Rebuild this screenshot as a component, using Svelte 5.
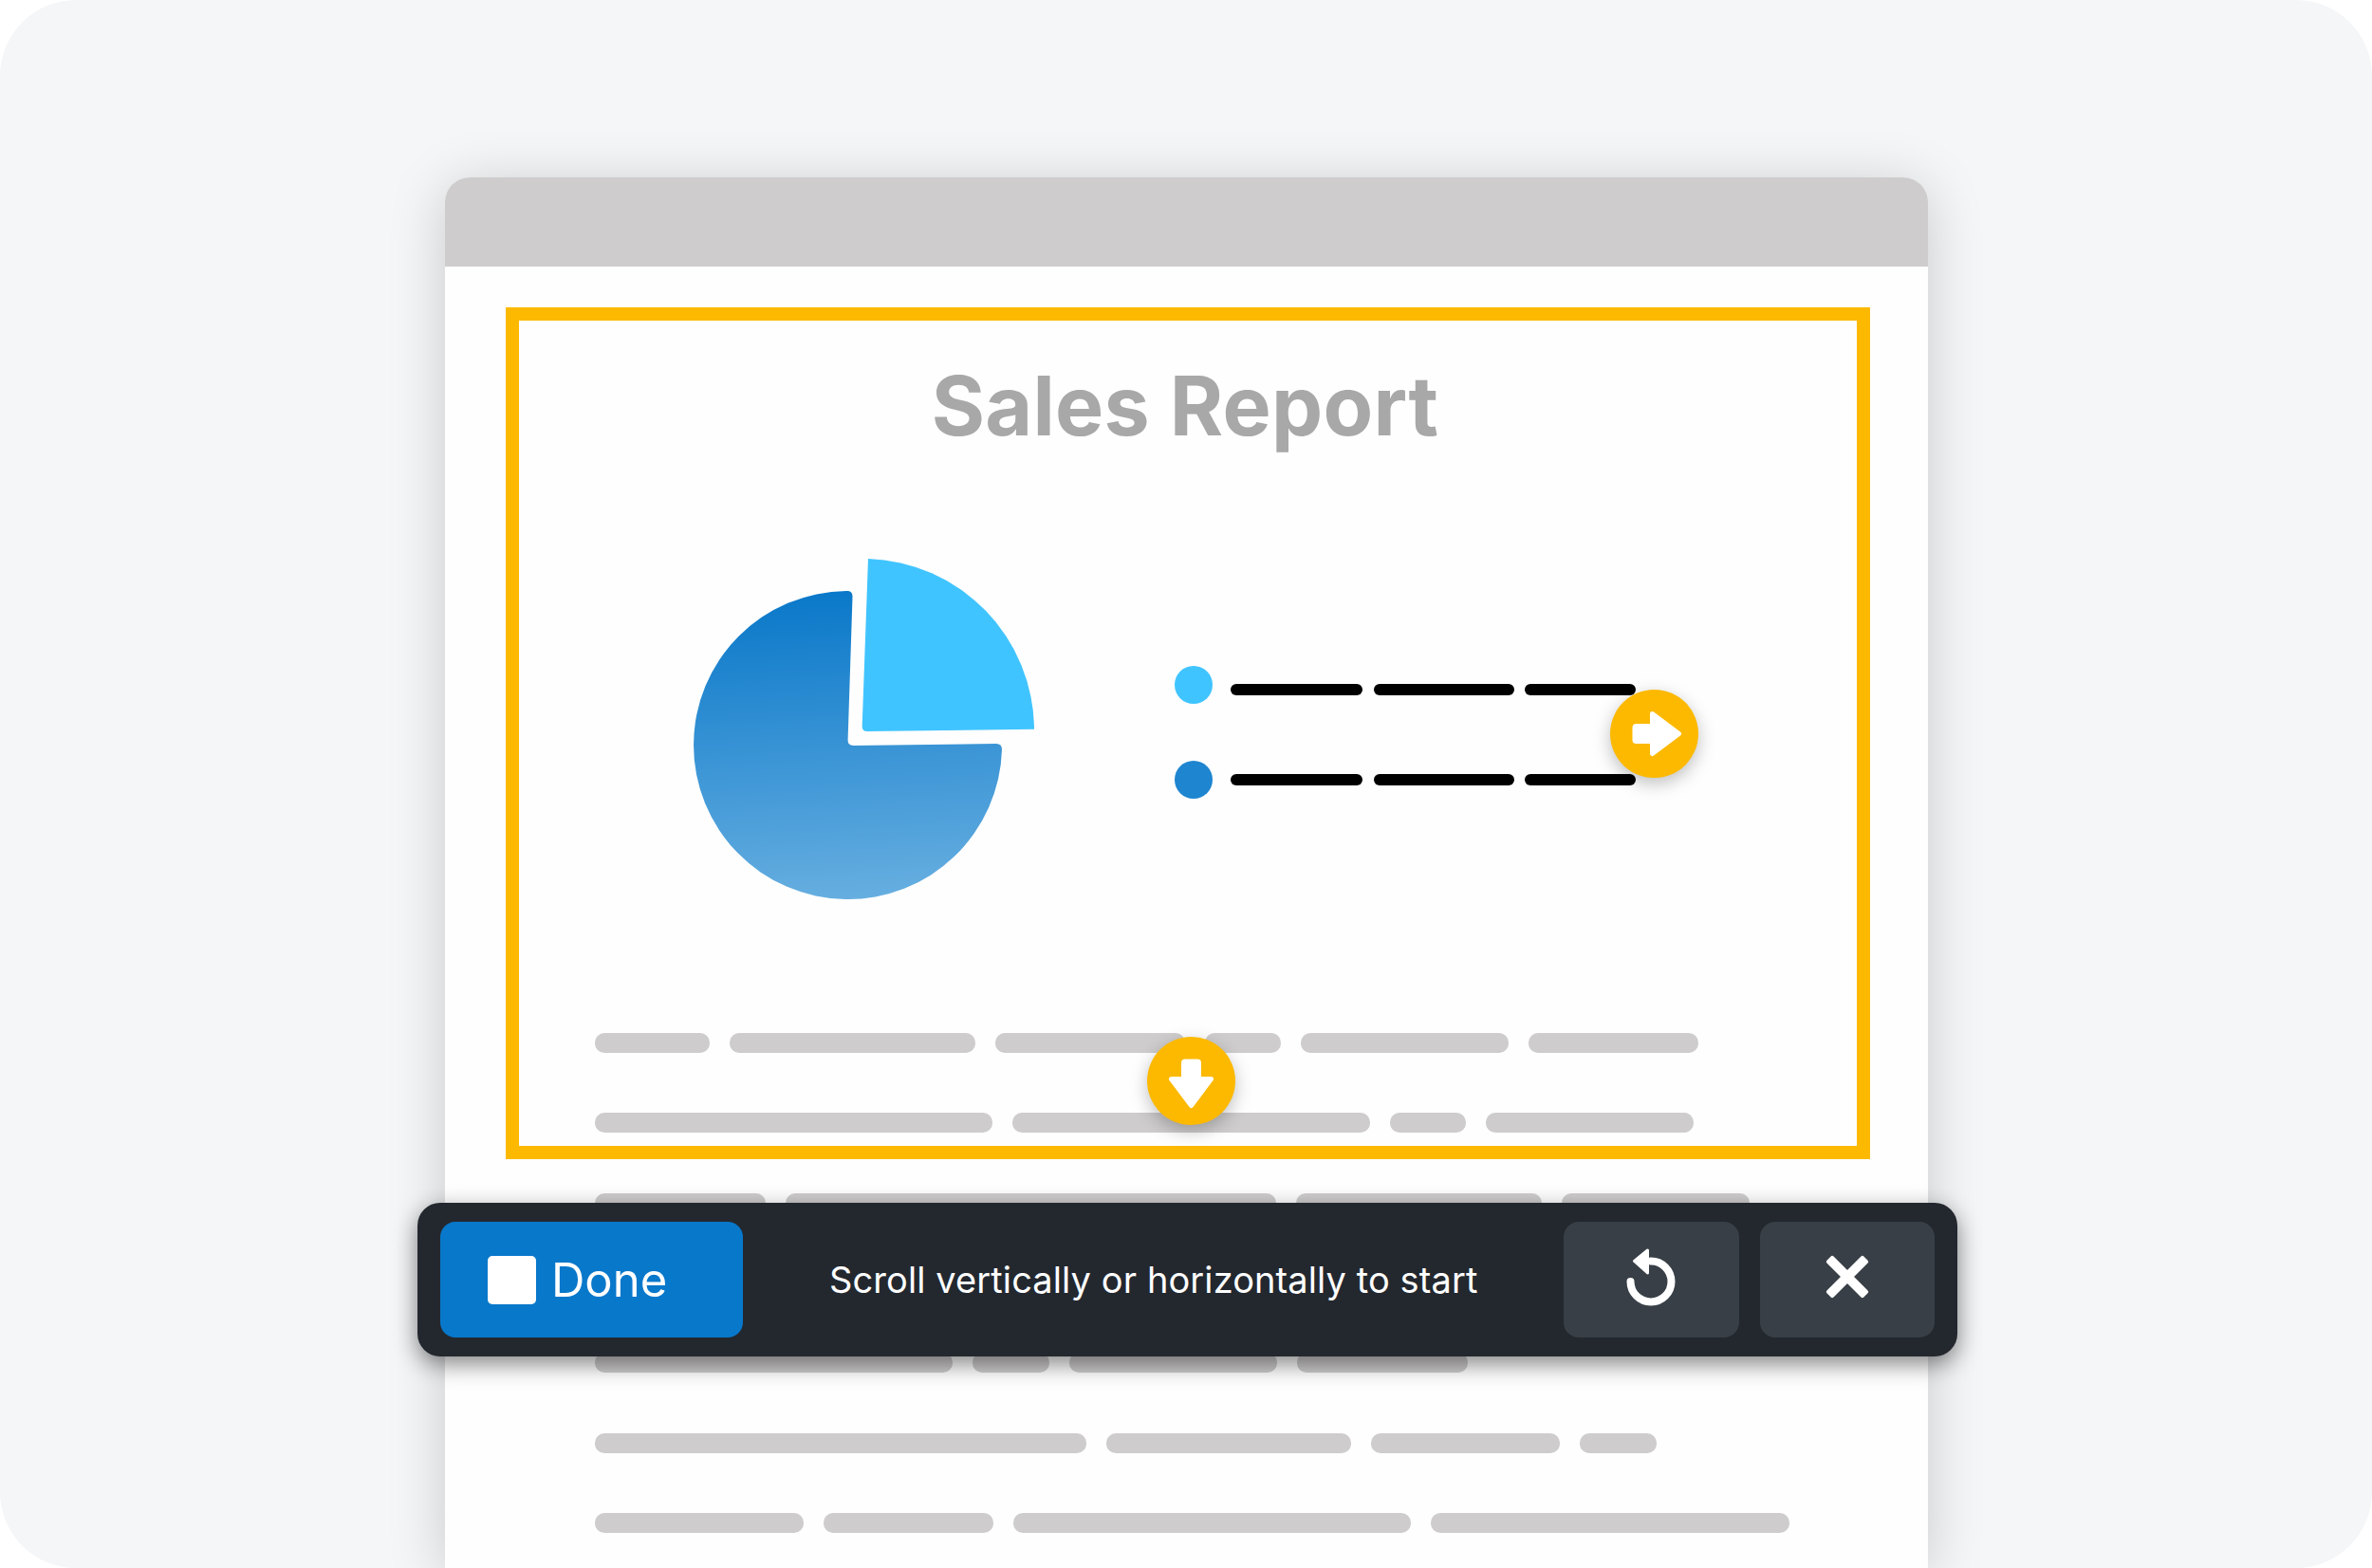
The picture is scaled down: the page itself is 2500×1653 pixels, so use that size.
<script lang="ts">
  // widths of the placeholder text bars, row by row
  const textRows: number[][] = [
    [121, 259, 200, 80, 219, 179],
    [419, 377, 80, 219],
    [180, 517, 259, 198],
    [300, 240, 160, 380],
    [377, 81, 219, 180],
    [518, 258, 199, 81],
    [220, 179, 419, 378]
  ];

  const legend = [
    { color: '#40c4ff', first: true },
    { color: '#1e85d0', first: false }
  ];

  const legendBars = [139, 148, 117];
</script>

{#snippet arrow()}
  <svg class="arrow" viewBox="0 0 93 93" aria-hidden="true">
    <rect x="23.5" y="36" width="24" height="21" rx="4" fill="#fff" />
    <path d="M44.5 25.5 L72.5 46.5 L44.5 67.5 Z" fill="#fff" stroke="#fff" stroke-width="5" stroke-linejoin="round" />
  </svg>
{/snippet}

<div class="stage">
  <div class="window">
    <div class="titlebar"></div>

    <div class="sheet">
      <h1 class="title">Sales Report</h1>

      <div class="chart">
        <svg class="pie" viewBox="720 580 380 380" aria-hidden="true">
          <defs>
            <linearGradient id="pieFill" gradientUnits="userSpaceOnUse" x1="885" y1="623" x2="905" y2="948">
              <stop offset="0" stop-color="#0a78c9" />
              <stop offset="1" stop-color="#66aee0" />
            </linearGradient>
          </defs>
          <path
            fill="url(#pieFill)"
            d="M898.5 629 L893.6 780 Q893.4 786 899.5 786 L1050 784 Q1056 784 1056 790 A162.5 162.5 0 1 1 892 623 L893 623 Q898.7 623 898.5 629 Z"
          />
          <path fill="#40c4ff" d="M915 589 A181 181 0 0 1 1090 768.7 L914 771 Q908.5 771 908.7 765 Z" />
        </svg>

        <div class="legend">
          {#each legend as item}
            <div class="legend-row">
              <span class="dot" style="background: {item.color}"></span>
              <div class="legend-bars" class:shifted={item.first}>
                {#each legendBars as w}
                  <span class="legend-bar" style="width: {w}px"></span>
                {/each}
              </div>
            </div>
          {/each}
        </div>
      </div>

      <div class="lines">
        {#each textRows as row}
          <div class="line">
            {#each row as w}
              <span class="bar" style="width: {w}px"></span>
            {/each}
          </div>
        {/each}
      </div>
    </div>

    <!-- capture frame, sits over the page content -->
    <div class="frame">
      <span class="handle handle-right">{@render arrow()}</span>
      <span class="handle handle-down">{@render arrow()}</span>
    </div>

    <div class="toolbar">
      <button class="done">
        <span class="stop"></span>
        <span>Done</span>
      </button>
      <span class="message">Scroll vertically or horizontally to start</span>
      <div class="actions">
        <button class="icon-btn" aria-label="Restart">
          <svg viewBox="1709.5 1314 60 70" width="60" height="70" aria-hidden="true">
            <path d="M1718 1351 A21.5 21.5 0 1 0 1739.5 1329.5" fill="none" stroke="#fff" stroke-width="8" stroke-linecap="round" />
            <path d="M1736 1318 L1722 1329.5 L1736 1342 Z" fill="#fff" stroke="#fff" stroke-width="3" stroke-linejoin="round" />
          </svg>
        </button>
        <button class="icon-btn" aria-label="Close">
          <svg class="close-icon" viewBox="0 0 46 46" width="46" height="46" aria-hidden="true">
            <rect x="-4.5" y="18" width="55" height="10" rx="2" fill="#fff" transform="rotate(45 23 23)" />
            <rect x="-4.5" y="18" width="55" height="10" rx="2" fill="#fff" transform="rotate(-45 23 23)" />
          </svg>
        </button>
      </div>
    </div>
  </div>
</div>

<style>
  :global(body) {
    margin: 0;
    background: #fff;
  }

  .stage {
    display: flex;
    box-sizing: border-box;
    width: 2500px;
    height: 1653px;
    padding: 187px 468px 0 469px;
    background: #f4f6f8;
    border-radius: 80px;
    overflow: hidden;
    font-family: Inter, "Liberation Sans", sans-serif;
  }

  .window {
    position: relative;
    flex: 1;
    background: #fefefe;
    border-radius: 26px 26px 0 0;
    box-shadow: 0 8px 60px rgba(0, 0, 0, 0.18);
  }

  .titlebar {
    height: 94px;
    background: #cecccd;
    border-radius: 26px 26px 0 0;
  }

  .title {
    margin: 0;
    padding: 92px 3px 0 0;
    font-size: 86px;
    line-height: 110px;
    font-weight: 700;
    letter-spacing: 0.3px;
    color: #a8a8a9;
    text-align: center;
  }

  .chart {
    display: flex;
    align-items: center;
    margin: 97px 0 0 251px;
  }

  .pie {
    display: block;
    width: 380px;
    height: 380px;
  }

  .legend {
    display: flex;
    flex-direction: column;
    gap: 60px;
    margin: 4px 0 0 138px;
  }

  .legend-row {
    display: flex;
    align-items: center;
    gap: 19px;
  }

  .dot {
    width: 40px;
    height: 40px;
    border-radius: 50%;
  }

  .legend-bars {
    display: flex;
    gap: 11.5px;
  }

  .legend-bars.shifted {
    margin-top: 10px;
  }

  .legend-bar {
    height: 12px;
    background: #000;
    border-radius: 6px;
  }

  .lines {
    display: flex;
    flex-direction: column;
    gap: 63.33px;
    margin: 129px 0 0 158px;
  }

  .line {
    display: flex;
    gap: 21px;
  }

  .bar {
    height: 21px;
    background: #cecccd;
    border-radius: 10px;
  }

  .frame {
    position: absolute;
    left: 64px;
    top: 137px;
    width: 1438px;
    height: 898px;
    box-sizing: border-box;
    border: 14px solid #fcb900;
  }

  .handle {
    position: absolute;
    width: 93px;
    height: 93px;
    background: #fcb900;
    border-radius: 50%;
    box-shadow: 0 6px 18px rgba(0, 0, 0, 0.25);
  }

  .handle-right {
    left: 1150px;
    top: 389px;
  }

  .handle-down {
    left: 662px;
    top: 755px;
  }

  .handle-down .arrow {
    transform: rotate(90deg);
  }

  .arrow {
    display: block;
    width: 93px;
    height: 93px;
  }

  .toolbar {
    position: absolute;
    left: -29px;
    top: 1081px;
    display: flex;
    align-items: center;
    box-sizing: border-box;
    width: 1623px;
    height: 162px;
    padding: 0 24px 0 24px;
    background: #23282f;
    border-radius: 24px;
    box-shadow: 0 8px 24px rgba(0, 0, 0, 0.48);
  }

  button {
    display: flex;
    align-items: center;
    height: 122px;
    border: 0;
    padding: 0;
    font: inherit;
    color: #fff;
  }

  .done {
    gap: 16px;
    width: 319px;
    padding-left: 50px;
    background: #0878cb;
    border-radius: 16px;
    font-size: 49px;
  }

  .stop {
    width: 51px;
    height: 51px;
    background: #fff;
    border-radius: 5px;
  }

  .message {
    margin-left: 91px;
    font-size: 38px;
    letter-spacing: 0.1px;
    color: #fff;
  }

  .actions {
    display: flex;
    gap: 22px;
    margin-left: auto;
  }

  .icon-btn {
    justify-content: center;
    width: 184.5px;
    background: #383f46;
    border-radius: 16px;
  }

  .close-icon {
    margin-bottom: 6px;
  }
</style>
